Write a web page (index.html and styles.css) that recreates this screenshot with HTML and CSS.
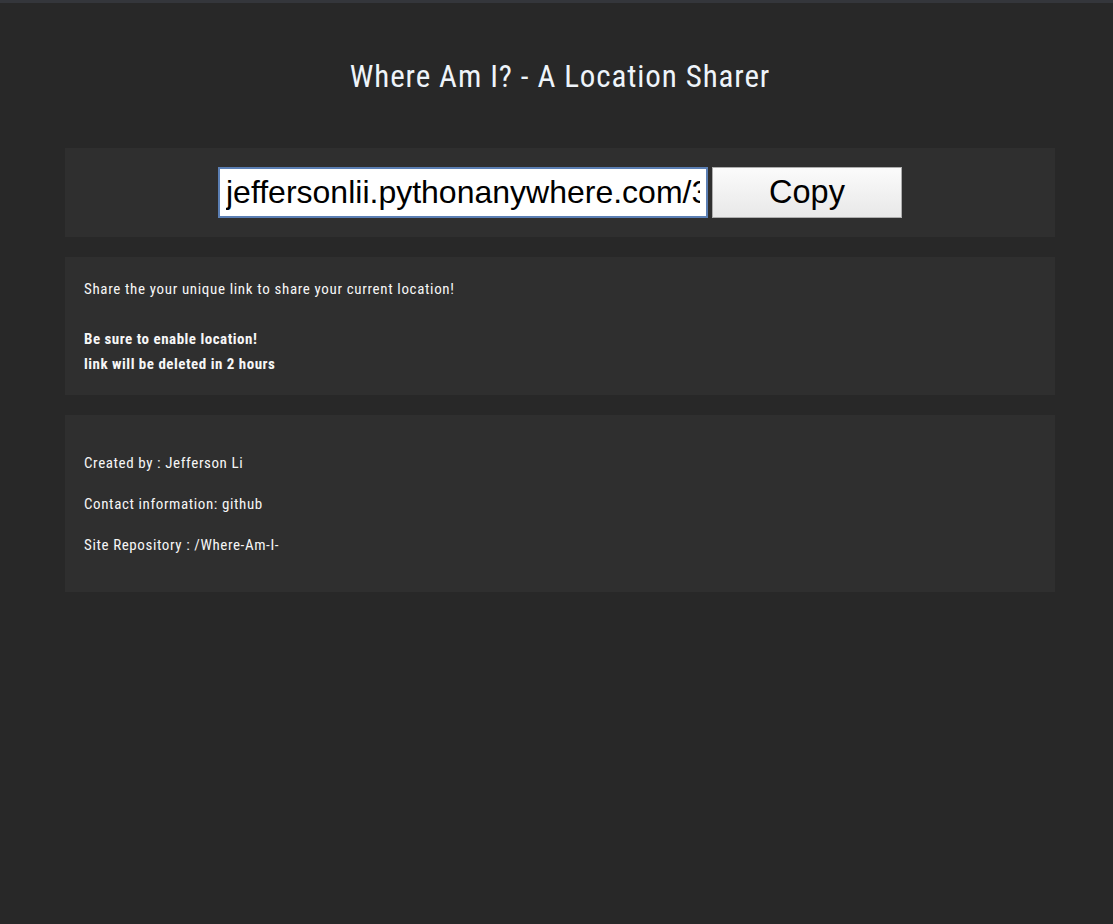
FILE: index.html
```html
<!DOCTYPE html>
<html>
<head>
<meta charset="utf-8">
<link rel="stylesheet" href="styles.css">
</head>
<body>
<div class="topbar"></div>
<main class="page">
  <h1 class="title">Where Am I? - A Location Sharer</h1>
  <section class="panel link-panel">
    <input class="link-input" type="text" value="jeffersonlii.pythonanywhere.com/3a9f1c2e" readonly>
    <button class="copy-btn">Copy</button>
  </section>
  <section class="panel info-panel">
    <p class="info-text">Share the your unique link to share your current location!</p>
    <p class="info-bold">Be sure to enable location!<br>link will be deleted in 2 hours</p>
  </section>
  <section class="panel credits-panel">
    <p class="credit">Created by : Jefferson Li</p>
    <p class="credit">Contact information: github</p>
    <p class="credit">Site Repository : /Where-Am-I-</p>
  </section>
</main>
</body>
</html>
```
FILE: styles.css
```css
html, body {
  margin: 0;
  padding: 0;
  background: #282828;
  height: 100%;
}
body {
  font-family: "Liberation Sans Narrow", "Roboto Condensed", "Roboto", sans-serif;
  color: #f6f6f6;
}
.topbar {
  height: 3px;
  background: #34363b;
}
.page {
  margin: 0 58px 0 65px;
  display: flex;
  flex-direction: column;
}
.title {
  margin: 51px 0 0;
  height: 46px;
  font-weight: 400;
  font-size: 31px;
  letter-spacing: 0.9px;
  line-height: 46px;
  text-align: center;
  color: #eef4fa;
}
.panel {
  background: #2f2f2f;
}
.link-panel {
  margin-top: 48px;
  height: 89px;
  display: flex;
  justify-content: center;
  align-items: center;
  gap: 4px;
}
.link-input {
  box-sizing: border-box;
  width: 490px;
  height: 51px;
  margin: 0;
  padding: 0 6px;
  border: 2px solid #5b7fb4;
  background: #ffffff;
  color: #000;
  font-family: "Liberation Sans", Arial, sans-serif;
  font-size: 32px;
  outline: none;
}
.copy-btn {
  box-sizing: border-box;
  width: 190px;
  height: 51px;
  margin: 0;
  border: 1px solid #adadad;
  background: linear-gradient(#fbfbfb, #e8e8e8);
  color: #000;
  font-family: "Liberation Sans", Arial, sans-serif;
  font-size: 32.5px;
  padding: 0;
}
.info-panel {
  margin-top: 20px;
  height: 138px;
  box-sizing: border-box;
  padding: 22px 19px 0;
}
.info-text {
  margin: 0;
  font-size: 15px;
  letter-spacing: 0.65px;
  line-height: 20px;
}
.info-bold {
  margin: 28px 0 0;
  font-size: 15px;
  font-weight: 700;
  letter-spacing: 0.5px;
  line-height: 25px;
}
.credits-panel {
  margin-top: 20px;
  height: 177px;
  box-sizing: border-box;
  padding: 38px 19px 0;
  display: flex;
  flex-direction: column;
  gap: 21px;
}
.credit {
  margin: 0;
  font-size: 15px;
  letter-spacing: 0.6px;
  line-height: 20px;
}
```
